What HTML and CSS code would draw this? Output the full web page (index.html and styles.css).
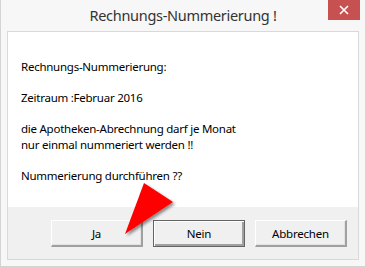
FILE: index.html
```html
<!DOCTYPE html>
<html>
<head>
<meta charset="utf-8">
<link rel="stylesheet" href="styles.css">
</head>
<body>
<div class="window">
  <div class="titlebar">
    <div class="title">Rechnungs-Nummerierung !</div>
    <div class="close"><svg width="10" height="10" viewBox="0 0 10 10"><path d="M1 1 L9 9 M9 1 L1 9" stroke="#fff" stroke-width="1.6"/></svg></div>
  </div>
  <div class="client">
    <div class="message">Rechnungs-Nummerierung:

Zeitraum :Februar 2016

die Apotheken-Abrechnung darf je Monat
nur einmal nummeriert werden !!

Nummerierung durchführen ??</div>
    <div class="buttons">
      <div class="btn">Ja</div>
      <div class="btn default">Nein</div>
      <div class="btn">Abbrechen</div>
    </div>
  </div>
  <svg class="arrow" width="70" height="70" viewBox="0 0 70 70">
    <defs>
      <filter id="sh" x="-30%" y="-30%" width="160%" height="160%">
        <feGaussianBlur in="SourceAlpha" stdDeviation="1.5"/>
        <feOffset dx="2" dy="2" result="b"/>
        <feComponentTransfer><feFuncA type="linear" slope="0.45"/></feComponentTransfer>
        <feMerge><feMergeNode/><feMergeNode in="SourceGraphic"/></feMerge>
      </filter>
    </defs>
    <polygon points="23,3 52,22 4,54" fill="#ff0000" filter="url(#sh)"/>
  </svg>
</div>
</body>
</html>
```
FILE: styles.css
```css
html, body {
  margin: 0;
  padding: 0;
  background: #f6f6f6;
}
.window {
  position: relative;
  width: 366px;
  height: 267px;
  box-sizing: border-box;
  background: #f7f7f7;
  border: 1px solid #d4d4d4;
  border-top: none;
  padding: 0 6px 6px 6px;
  display: flex;
  flex-direction: column;
  font-family: "Noto Sans", sans-serif;
}
.titlebar {
  height: 31px;
  display: flex;
  justify-content: center;
  position: relative;
}
.title {
  font-size: 14.5px;
  letter-spacing: -0.3px;
  color: #333;
  margin-top: 5px;
  line-height: 20px;
}
.close {
  position: absolute;
  right: -1px;
  top: 0;
  width: 32px;
  height: 20px;
  background: #c75050;
  display: flex;
  align-items: center;
  justify-content: center;
}
.client {
  flex: 1;
  border: 1px solid #d9d9d9;
  display: flex;
  flex-direction: column;
}
.message {
  flex: 1;
  background: #fff;
  white-space: pre-line;
  font-size: 11.5px;
  letter-spacing: -0.25px;
  line-height: 15.5px;
  color: #000;
  padding: 27px 0 0 13px;
}
.buttons {
  height: 52px;
  background: #f0f0f0;
  display: flex;
  justify-content: flex-end;
  align-items: flex-start;
  gap: 10px;
  padding: 13px 11px 0 0;
  box-sizing: border-box;
}
.btn {
  width: 92px;
  height: 27px;
  box-sizing: border-box;
  background: #f0f0f0;
  border-top: 1px solid #fff;
  border-left: 1px solid #fff;
  border-right: 2px solid #a0a0a0;
  border-bottom: 2px solid #a0a0a0;
  box-shadow: inset -1px -1px 0 #e3e3e3;
  font-size: 11.5px;
  letter-spacing: -0.2px;
  color: #000;
  display: flex;
  align-items: center;
  justify-content: center;
}
.btn.default {
  border: 1px solid #646464;
  box-shadow: inset 1px 1px 0 #fff, inset -2px -2px 0 #a0a0a0;
}
.arrow {
  position: absolute;
  left: 120px;
  top: 180px;
}
```
